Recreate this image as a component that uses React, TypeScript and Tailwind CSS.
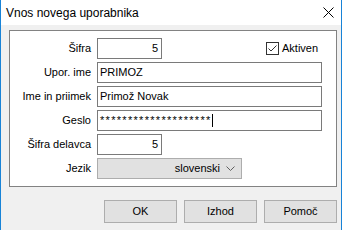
import React from "react";

const Label = ({ children }: { children: React.ReactNode }) => (
  <div className="w-[81px] text-right pr-0 leading-none">{children}</div>
);

const Input = ({
  w,
  children,
  right,
}: {
  w: string;
  children?: React.ReactNode;
  right?: boolean;
}) => (
  <div
    className={`${w} h-[21px] ml-[6px] border border-[#7a7a7a] bg-white flex items-center ${
      right ? "justify-end pr-[3px]" : "pl-[2px]"
    } leading-none`}
  >
    {children}
  </div>
);

export default function App() {
  return (
    <div className="w-[342px] h-[230px] bg-[#f0f0f0] border-x border-[#1883d7] flex flex-col text-[11px] text-black font-['Liberation_Sans',Arial,sans-serif] overflow-hidden">
      <div className="h-[25px] bg-white flex items-center pl-[5px] pr-[7px] shrink-0">
        <span className="text-[12px] leading-none">Vnos novega uporabnika</span>
        <svg className="ml-auto" width="11" height="11" viewBox="0 0 11 11">
          <path d="M0.5 0.5 L10.5 10.5 M10.5 0.5 L0.5 10.5" stroke="#000" strokeWidth="1" fill="none" />
        </svg>
      </div>
      <div className="pl-[8px] pr-[4px] pt-[5px]">
        <div className="h-[157px] border border-[#828282] bg-white pt-[7px] flex flex-col gap-[3px]">
          <div className="flex items-center">
            <Label>Šifra</Label>
            <Input w="w-[65px]" right>
              5
            </Input>
            <div className="ml-[104px] w-[13px] h-[13px] border border-[#333] bg-white flex items-center justify-center">
              <svg width="11" height="11" viewBox="0 0 11 11">
                <path d="M1.5 5.5 L4 8 L9.5 2.5" stroke="#333" strokeWidth="1" fill="none" />
              </svg>
            </div>
            <span className="ml-[3px] leading-none">Aktiven</span>
          </div>
          <div className="flex items-center">
            <Label>Upor. ime</Label>
            <Input w="w-[225px]">PRIMOZ</Input>
          </div>
          <div className="flex items-center">
            <Label>Ime in priimek</Label>
            <Input w="w-[225px]">Primož Novak</Input>
          </div>
          <div className="flex items-center">
            <Label>Geslo</Label>
            <Input w="w-[225px]">
              <span className="tracking-[1.3px]">********************</span>
              <span className="w-px h-[13px] bg-black" />
            </Input>
          </div>
          <div className="flex items-center">
            <Label>Šifra delavca</Label>
            <Input w="w-[65px]" right>
              5
            </Input>
          </div>
          <div className="flex items-center">
            <Label>Jezik</Label>
            <div className="w-[145px] h-[21px] ml-[6px] border border-[#adadad] bg-[#e1e1e1] flex items-center justify-end pr-[6px] leading-none">
              <span>slovenski</span>
              <svg className="ml-[6px]" width="9" height="6" viewBox="0 0 9 6">
                <path d="M0.5 0.5 L4.5 4.5 L8.5 0.5" stroke="#606060" strokeWidth="1" fill="none" />
              </svg>
            </div>
          </div>
        </div>
        <div className="mt-[13px] flex justify-end gap-[7px]">
          {["OK", "Izhod", "Pomoč"].map((t) => (
            <div
              key={t}
              className="w-[73px] h-[23px] border border-[#adadad] bg-[#e1e1e1] flex items-center justify-center leading-none"
            >
              {t}
            </div>
          ))}
        </div>
      </div>
    </div>
  );
}
